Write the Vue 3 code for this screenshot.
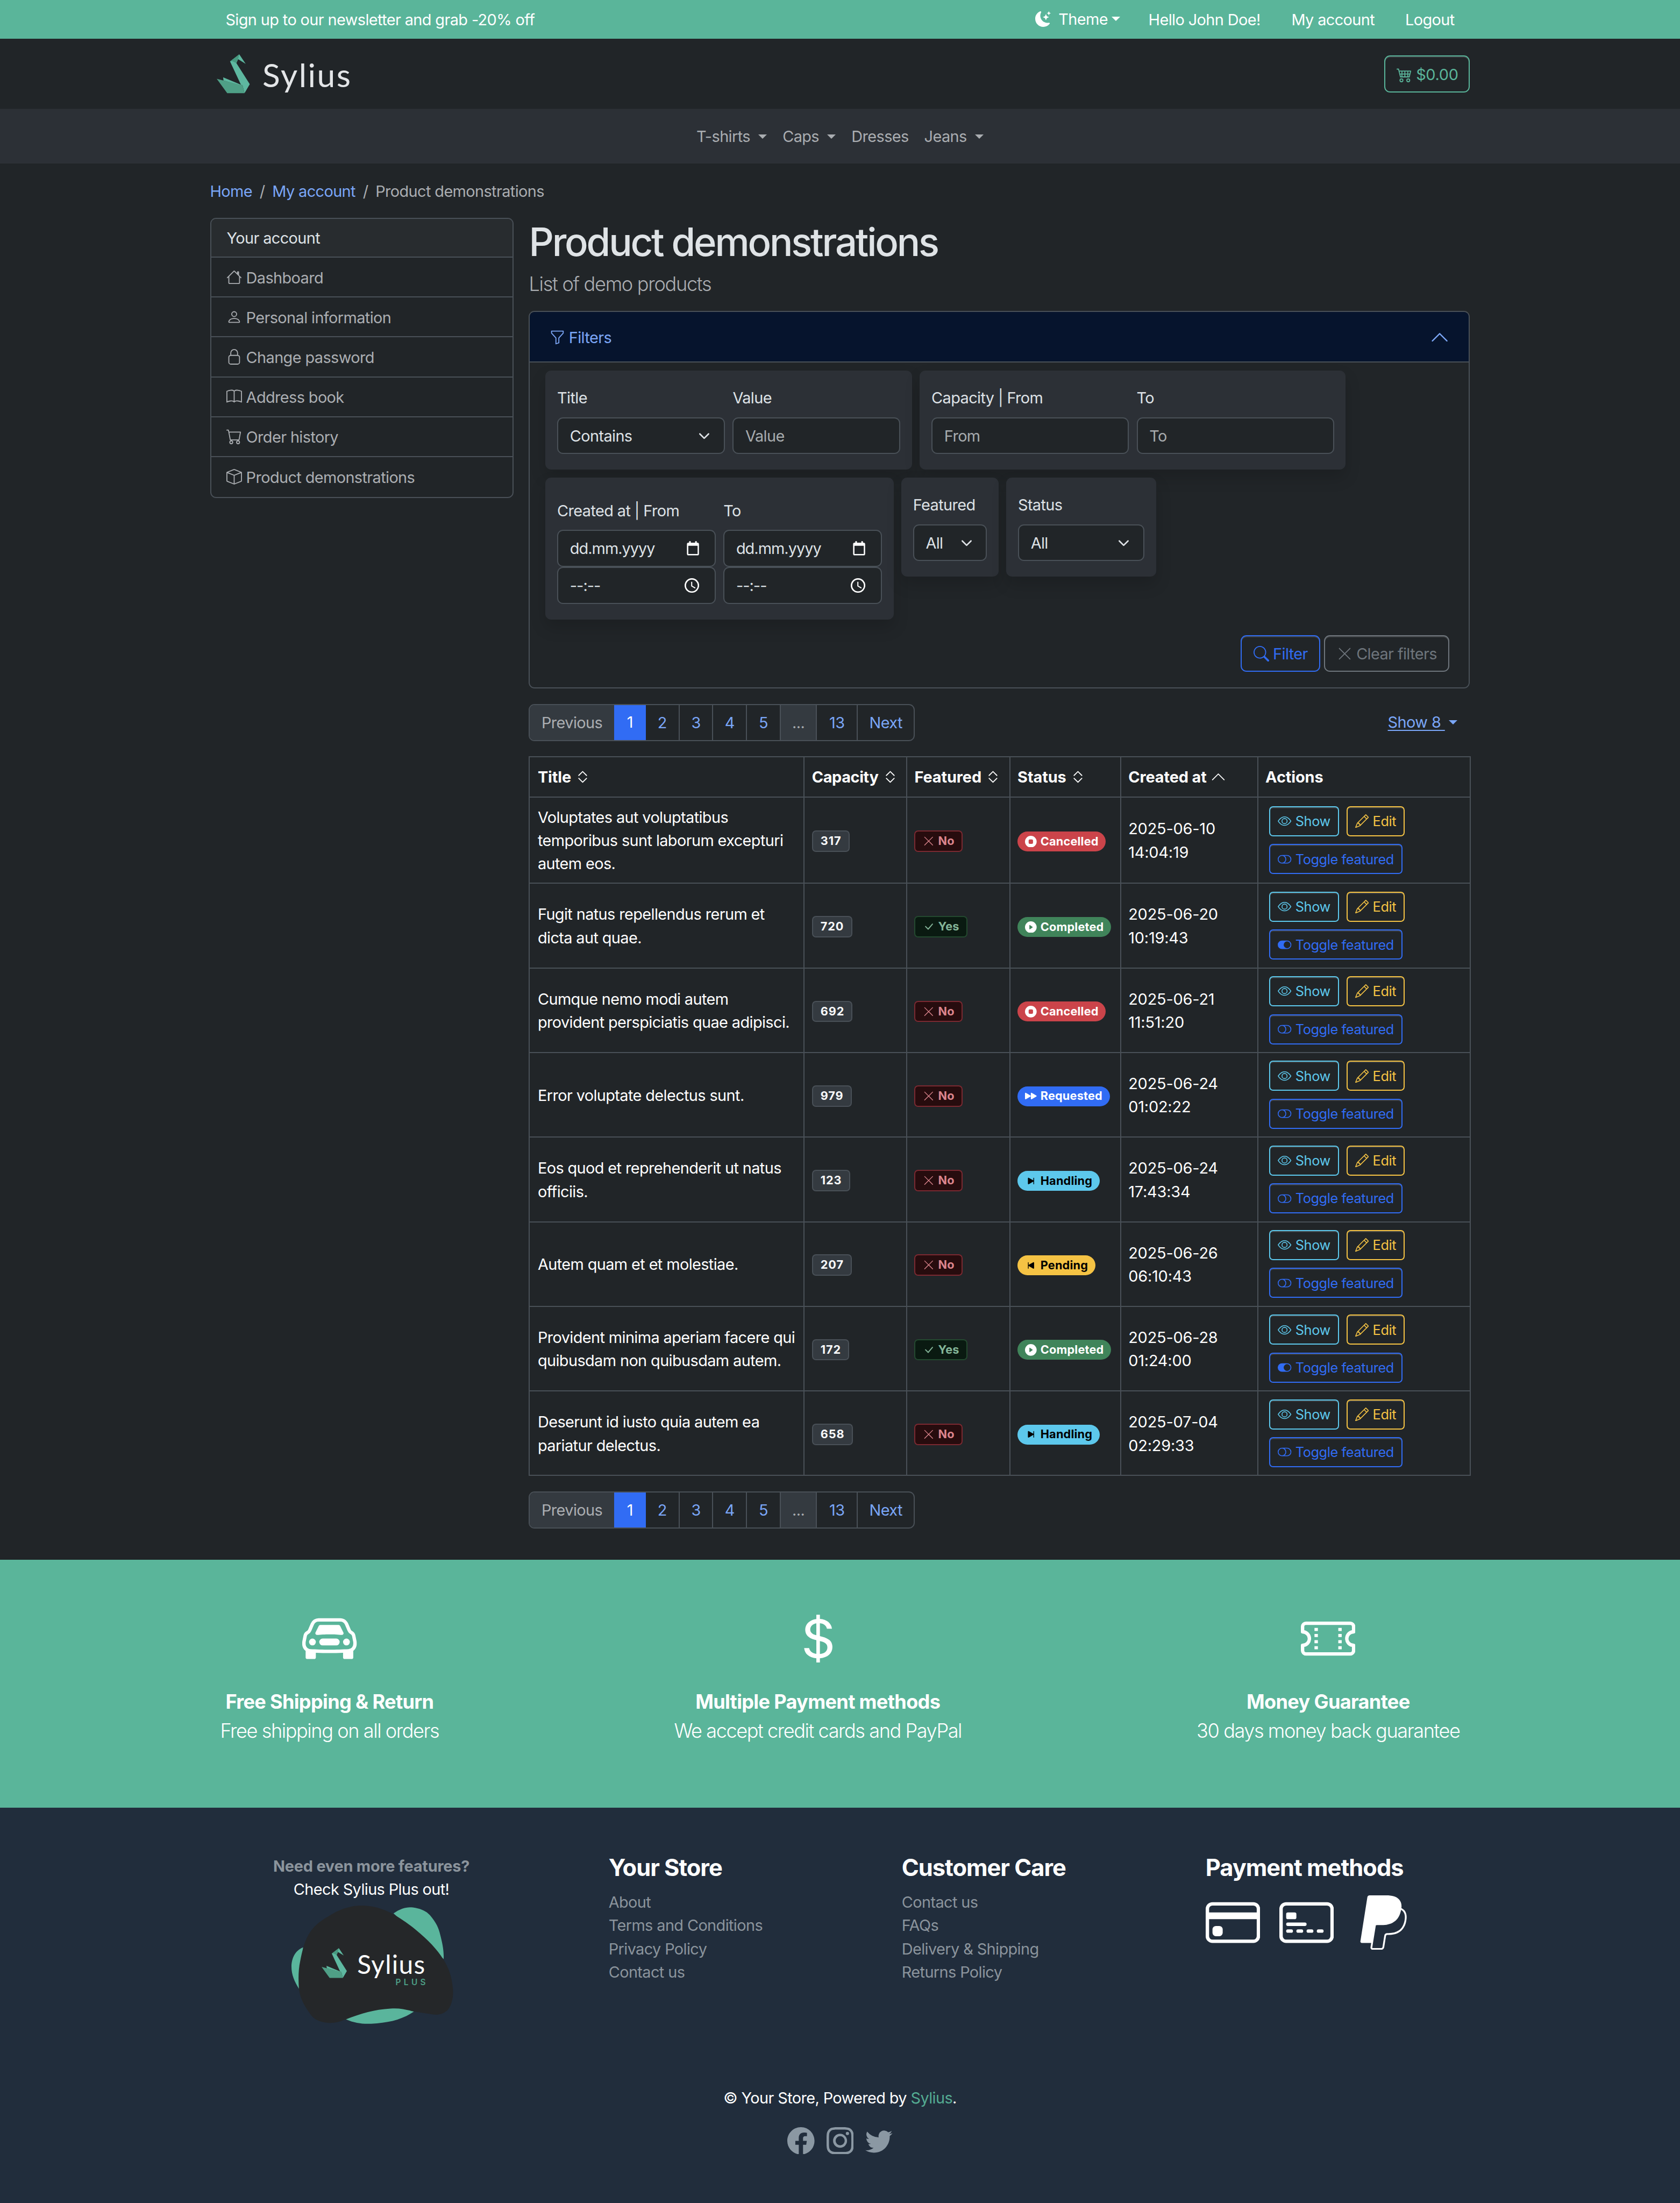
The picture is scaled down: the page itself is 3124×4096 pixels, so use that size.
<script setup>
import { h } from 'vue'

const paths = {
  moon: ['M6 .278a.768.768 0 0 1 .08.858 7.208 7.208 0 0 0-.878 3.46c0 4.021 3.278 7.277 7.318 7.277.527 0 1.04-.055 1.533-.16a.787.787 0 0 1 .81.316.733.733 0 0 1-.031.893A8.349 8.349 0 0 1 8.344 16C3.734 16 0 12.286 0 7.71 0 4.266 2.114 1.312 5.124.06A.752.752 0 0 1 6 .278z', 'M10.794 3.148a.217.217 0 0 1 .412 0l.387 1.162c.173.518.579.924 1.097 1.097l1.162.387a.217.217 0 0 1 0 .412l-1.162.387a1.734 1.734 0 0 0-1.097 1.097l-.387 1.162a.217.217 0 0 1-.412 0l-.387-1.162A1.734 1.734 0 0 0 9.31 6.593l-1.162-.387a.217.217 0 0 1 0-.412l1.162-.387a1.734 1.734 0 0 0 1.097-1.097l.387-1.162zM13.863.099a.145.145 0 0 1 .274 0l.258.774c.115.346.386.617.732.732l.774.258a.145.145 0 0 1 0 .274l-.774.258a1.156 1.156 0 0 0-.732.732l-.258.774a.145.145 0 0 1-.274 0l-.258-.774a1.156 1.156 0 0 0-.732-.732l-.774-.258a.145.145 0 0 1 0-.274l.774-.258c.346-.115.617-.386.732-.732L13.863.1z'],
  cart4: ['M0 2.5A.5.5 0 0 1 .5 2H2a.5.5 0 0 1 .485.379L2.89 4H14.5a.5.5 0 0 1 .485.621l-1.5 6A.5.5 0 0 1 13 11H4a.5.5 0 0 1-.485-.379L1.61 3H.5a.5.5 0 0 1-.5-.5zM3.14 5l.5 2H5V5H3.14zM6 5v2h2V5H6zm3 0v2h2V5H9zm3 0v2h1.36l.5-2H12zm1.11 3H12v2h.61l.5-2zM11 8H9v2h2V8zM8 8H6v2h2V8zM5 8H3.89l.5 2H5V8zm0 5a1 1 0 1 0 0 2 1 1 0 0 0 0-2zm-2 1a2 2 0 1 1 4 0 2 2 0 0 1-4 0zm9-1a1 1 0 1 0 0 2 1 1 0 0 0 0-2zm-2 1a2 2 0 1 1 4 0 2 2 0 0 1-4 0z'],
  house: ['M8.707 1.5a1 1 0 0 0-1.414 0L.646 8.146a.5.5 0 0 0 .708.708L2 8.207V13.5A1.5 1.5 0 0 0 3.5 15h9a1.5 1.5 0 0 0 1.5-1.5V8.207l.646.647a.5.5 0 0 0 .708-.708L13 5.793V2.5a.5.5 0 0 0-.5-.5h-1a.5.5 0 0 0-.5.5v1.293L8.707 1.5ZM13 7.207V13.5a.5.5 0 0 1-.5.5h-9a.5.5 0 0 1-.5-.5V7.207l5-5 5 5Z'],
  person: ['M8 8a3 3 0 1 0 0-6 3 3 0 0 0 0 6Zm2-3a2 2 0 1 1-4 0 2 2 0 0 1 4 0Zm4 8c0 1-1 1-1 1H3s-1 0-1-1 1-4 6-4 6 3 6 4Zm-1-.004c-.001-.246-.154-.986-.832-1.664C11.516 10.68 10.289 10 8 10c-2.29 0-3.516.68-4.168 1.332-.678.678-.83 1.418-.832 1.664h10Z'],
  lock: ['M8 0a4 4 0 0 1 4 4v2.05a2.5 2.5 0 0 1 2 2.45v5a2.5 2.5 0 0 1-2.5 2.5h-7A2.5 2.5 0 0 1 2 13.5v-5a2.5 2.5 0 0 1 2-2.45V4a4 4 0 0 1 4-4M4.5 7A1.5 1.5 0 0 0 3 8.5v5A1.5 1.5 0 0 0 4.5 15h7a1.5 1.5 0 0 0 1.5-1.5v-5A1.5 1.5 0 0 0 11.5 7zM8 1a3 3 0 0 0-3 3v2h6V4a3 3 0 0 0-3-3'],
  book: ['M1 2.828c.885-.37 2.154-.769 3.388-.893 1.33-.134 2.458.063 3.112.752v9.746c-.935-.53-2.12-.603-3.213-.493-1.18.12-2.37.461-3.287.811V2.828zm7.5-.141c.654-.689 1.782-.886 3.112-.752 1.234.124 2.503.523 3.388.893v9.923c-.918-.35-2.107-.692-3.287-.81-1.094-.111-2.278-.039-3.213.492V2.687zM8 1.783C7.015.936 5.587.81 4.287.94c-1.514.153-3.042.672-3.994 1.105A.5.5 0 0 0 0 2.5v11a.5.5 0 0 0 .707.455c.882-.4 2.303-.881 3.68-1.02 1.409-.142 2.59.087 3.223.877a.5.5 0 0 0 .78 0c.633-.79 1.814-1.019 3.222-.877 1.378.139 2.8.62 3.681 1.02A.5.5 0 0 0 16 13.5v-11a.5.5 0 0 0-.293-.455c-.952-.433-2.48-.952-3.994-1.105C10.413.809 8.985.936 8 1.783z'],
  cart: ['M0 1.5A.5.5 0 0 1 .5 1H2a.5.5 0 0 1 .485.379L2.89 3H14.5a.5.5 0 0 1 .491.592l-1.5 8A.5.5 0 0 1 13 12H4a.5.5 0 0 1-.491-.408L2.01 3.607 1.61 2H.5a.5.5 0 0 1-.5-.5zM3.102 4l1.313 7h8.17l1.313-7H3.102zM5 12a2 2 0 1 0 0 4 2 2 0 0 0 0-4zm7 0a2 2 0 1 0 0 4 2 2 0 0 0 0-4zm-7 1a1 1 0 1 1 0 2 1 1 0 0 1 0-2zm7 0a1 1 0 1 1 0 2 1 1 0 0 1 0-2z'],
  box: ['M8.186 1.113a.5.5 0 0 0-.372 0L1.846 3.5 8 5.961 14.154 3.5 8.186 1.113zM15 4.239l-6.5 2.6v7.922l6.5-2.6V4.24zM7.5 14.762V6.838L1 4.239v7.923l6.5 2.6zM7.443.184a1.5 1.5 0 0 1 1.114 0l7.129 2.852A.5.5 0 0 1 16 3.5v8.662a1 1 0 0 1-.629.928l-7.185 2.874a.5.5 0 0 1-.372 0L.63 13.09a1 1 0 0 1-.63-.928V3.5a.5.5 0 0 1 .314-.464L7.443.184z'],
  funnel: ['M1.5 1.5A.5.5 0 0 1 2 1h12a.5.5 0 0 1 .5.5v2a.5.5 0 0 1-.128.334L10 8.692V13.5a.5.5 0 0 1-.342.474l-3 1A.5.5 0 0 1 6 14.5V8.692L1.628 3.834A.5.5 0 0 1 1.5 3.5v-2zm1 .5v1.308l4.372 4.858A.5.5 0 0 1 7 8.5v5.306l2-.666V8.5a.5.5 0 0 1 .128-.334L13.5 3.308V2h-11z'],
  search: ['M11.742 10.344a6.5 6.5 0 1 0-1.397 1.398h-.001c.03.04.062.078.098.115l3.85 3.85a1 1 0 0 0 1.415-1.414l-3.85-3.85a1.007 1.007 0 0 0-.115-.1zM12 6.5a5.5 5.5 0 1 1-11 0 5.5 5.5 0 0 1 11 0z'],
  x: ['M2.146 2.854a.5.5 0 1 1 .708-.708L8 7.293l5.146-5.147a.5.5 0 0 1 .708.708L8.707 8l5.147 5.146a.5.5 0 0 1-.708.708L8 8.707l-5.146 5.147a.5.5 0 0 1-.708-.708L7.293 8 2.146 2.854Z'],
  check: ['M12.736 3.97a.733.733 0 0 1 1.047 0c.286.289.29.756.01 1.05L7.88 12.01a.733.733 0 0 1-1.065.02L3.217 8.384a.757.757 0 0 1 0-1.06.733.733 0 0 1 1.047 0l3.052 3.093 5.4-6.425a.247.247 0 0 1 .02-.022Z'],
  eye: ['M16 8s-3-5.5-8-5.5S0 8 0 8s3 5.5 8 5.5S16 8 16 8zM1.173 8a13.133 13.133 0 0 1 1.66-2.043C4.12 4.668 5.88 3.5 8 3.5c2.12 0 3.879 1.168 5.168 2.457A13.133 13.133 0 0 1 14.828 8c-.058.087-.122.183-.195.288-.335.48-.83 1.12-1.465 1.755C11.879 11.332 10.119 12.5 8 12.5c-2.12 0-3.879-1.168-5.168-2.457A13.134 13.134 0 0 1 1.172 8z', 'M8 5.5a2.5 2.5 0 1 0 0 5 2.5 2.5 0 0 0 0-5zM4.5 8a3.5 3.5 0 1 1 7 0 3.5 3.5 0 0 1-7 0z'],
  pencil: ['M12.146.146a.5.5 0 0 1 .708 0l3 3a.5.5 0 0 1 0 .708l-10 10a.5.5 0 0 1-.168.11l-5 2a.5.5 0 0 1-.65-.65l2-5a.5.5 0 0 1 .11-.168l10-10zM11.207 2.5 13.5 4.793 14.793 3.5 12.5 1.207 11.207 2.5zm1.586 3L10.5 3.207 4 9.707V10h.5a.5.5 0 0 1 .5.5v.5h.5a.5.5 0 0 1 .5.5v.5h.293l6.5-6.5zm-9.761 5.175-.106.106-1.528 3.821 3.821-1.528.106-.106A.5.5 0 0 1 5 12.5V12h-.5a.5.5 0 0 1-.5-.5V11h-.5a.5.5 0 0 1-.468-.325z'],
  toggleOff: ['M11 4a4 4 0 0 1 0 8H8a4.992 4.992 0 0 0 2-4 4.992 4.992 0 0 0-2-4h3zm-6 8a4 4 0 1 1 0-8 4 4 0 0 1 0 8zM0 8a5 5 0 0 0 5 5h6a5 5 0 0 0 0-10H5a5 5 0 0 0-5 5z'],
  toggleOn: ['M5 3a5 5 0 0 0 0 10h6a5 5 0 0 0 0-10H5zm6 9a4 4 0 1 1 0-8 4 4 0 0 1 0 8z'],
  up: ['M7.646 4.646a.5.5 0 0 1 .708 0l6 6a.5.5 0 0 1-.708.708L8 5.707l-5.646 5.647a.5.5 0 0 1-.708-.708l6-6z'],
  expand: ['M3.646 9.146a.5.5 0 0 1 .708 0L8 12.793l3.646-3.647a.5.5 0 0 1 .708.708l-4 4a.5.5 0 0 1-.708 0l-4-4a.5.5 0 0 1 0-.708zm0-2.292a.5.5 0 0 0 .708 0L8 3.207l3.646 3.647a.5.5 0 0 0 .708-.708l-4-4a.5.5 0 0 0-.708 0l-4 4a.5.5 0 0 0 0 .708z'],
  stop: ['M16 8A8 8 0 1 1 0 8a8 8 0 0 1 16 0zM6.5 5A1.5 1.5 0 0 0 5 6.5v3A1.5 1.5 0 0 0 6.5 11h3A1.5 1.5 0 0 0 11 9.5v-3A1.5 1.5 0 0 0 9.5 5h-3z'],
  play: ['M16 8A8 8 0 1 1 0 8a8 8 0 0 1 16 0zM6.79 5.093A.5.5 0 0 0 6 5.5v5a.5.5 0 0 0 .79.407l3.5-2.5a.5.5 0 0 0 0-.814l-3.5-2.5z'],
  forward: ['M7.596 7.304a.802.802 0 0 1 0 1.392l-6.363 3.692C.713 12.69 0 12.345 0 11.692V4.308c0-.653.713-.998 1.233-.696l6.363 3.692Z', 'M15.596 7.304a.802.802 0 0 1 0 1.392l-6.363 3.692C8.713 12.69 8 12.345 8 11.692V4.308c0-.653.713-.998 1.233-.696l6.363 3.692Z'],
  skipEnd: ['M12.5 4a.5.5 0 0 0-1 0v3.248L5.233 3.612C4.693 3.3 4 3.678 4 4.308v7.384c0 .63.692 1.01 1.233.697L11.5 8.753V12a.5.5 0 0 0 1 0V4z'],
  skipStart: ['M4 4a.5.5 0 0 1 1 0v3.248l6.267-3.636c.54-.313 1.232.066 1.232.696v7.384c0 .63-.692 1.01-1.232.697L5 8.753V12a.5.5 0 0 1-1 0V4z'],
  car: ['M4 9a1 1 0 1 1-2 0 1 1 0 0 1 2 0Zm10 0a1 1 0 1 1-2 0 1 1 0 0 1 2 0ZM6 8a1 1 0 0 0 0 2h4a1 1 0 1 0 0-2H6ZM4.862 4.276 3.906 6.19a.51.51 0 0 0 .497.731c.91-.073 2.35-.17 3.597-.17 1.247 0 2.688.097 3.597.17a.51.51 0 0 0 .497-.731l-.956-1.913A.5.5 0 0 0 10.691 4H5.309a.5.5 0 0 0-.447.276Z', 'M2.52 3.515A2.5 2.5 0 0 1 4.82 2h6.362c1 0 1.904.596 2.298 1.515l.792 1.848c.075.175.21.319.38.404.5.25.855.715.965 1.262l.335 1.679c.033.161.049.325.049.49v.413c0 .814-.39 1.543-1 1.997V13.5a.5.5 0 0 1-.5.5h-2a.5.5 0 0 1-.5-.5v-1.338c-1.292.048-2.745.088-4 .088s-2.708-.04-4-.088V13.5a.5.5 0 0 1-.5.5h-2a.5.5 0 0 1-.5-.5v-1.892c-.61-.454-1-1.183-1-1.997v-.413a2.5 2.5 0 0 1 .049-.49l.335-1.68c.11-.546.465-1.012.964-1.261a.807.807 0 0 0 .381-.404l.792-1.848ZM4.82 3a1.5 1.5 0 0 0-1.379.91l-.792 1.847a1.8 1.8 0 0 1-.853.904.807.807 0 0 0-.43.564L1.03 8.904a1.5 1.5 0 0 0-.03.294v.413c0 .796.62 1.448 1.408 1.484 1.555.07 3.786.155 5.592.155 1.806 0 4.037-.084 5.592-.155A1.479 1.479 0 0 0 15 9.611v-.413c0-.099-.01-.197-.03-.294l-.335-1.68a.807.807 0 0 0-.43-.563 1.807 1.807 0 0 1-.853-.904l-.792-1.848A1.5 1.5 0 0 0 11.18 3H4.82Z'],
  dollar: ['M4 10.781c.148 1.667 1.513 2.85 3.591 3.003V15h1.043v-1.216c2.27-.179 3.678-1.438 3.678-3.3 0-1.59-.947-2.51-2.956-3.028l-.722-.187V3.467c1.122.11 1.879.714 2.07 1.616h1.47c-.166-1.6-1.54-2.748-3.54-2.875V1H7.591v1.233c-1.939.23-3.27 1.472-3.27 3.156 0 1.454.966 2.483 2.661 2.917l.61.162v4.031c-1.149-.17-1.94-.8-2.131-1.718H4zm3.391-3.836c-1.043-.263-1.6-.825-1.6-1.616 0-.944.704-1.641 1.8-1.828v3.495l-.2-.05zm1.591 1.872c1.287.323 1.852.859 1.852 1.769 0 1.097-.826 1.828-2.2 1.939V8.73l.348.086z'],
  ticket: ['M4 4.85v.9h1v-.9H4Zm7 0v.9h1v-.9h-1Zm-7 1.8v.9h1v-.9H4Zm7 0v.9h1v-.9h-1Zm-7 1.8v.9h1v-.9H4Zm7 0v.9h1v-.9h-1Zm-7 1.8v.9h1v-.9H4Zm7 0v.9h1v-.9h-1Z', 'M1.5 3A1.5 1.5 0 0 0 0 4.5V6a.5.5 0 0 0 .5.5 1.5 1.5 0 1 1 0 3 .5.5 0 0 0-.5.5v1.5A1.5 1.5 0 0 0 1.5 13h13a1.5 1.5 0 0 0 1.5-1.5V10a.5.5 0 0 0-.5-.5 1.5 1.5 0 0 1 0-3A.5.5 0 0 0 16 6V4.5A1.5 1.5 0 0 0 14.5 3h-13ZM1 4.5a.5.5 0 0 1 .5-.5h13a.5.5 0 0 1 .5.5v1.05a2.5 2.5 0 0 0 0 4.9v1.05a.5.5 0 0 1-.5.5h-13a.5.5 0 0 1-.5-.5v-1.05a2.5 2.5 0 0 0 0-4.9V4.5Z'],
  card: ['M0 4a2 2 0 0 1 2-2h12a2 2 0 0 1 2 2v8a2 2 0 0 1-2 2H2a2 2 0 0 1-2-2V4zm2-1a1 1 0 0 0-1 1v1h14V4a1 1 0 0 0-1-1H2zm13 4H1v5a1 1 0 0 0 1 1h12a1 1 0 0 0 1-1V7z', 'M2 10a1 1 0 0 1 1-1h1a1 1 0 0 1 1 1v1a1 1 0 0 1-1 1H3a1 1 0 0 1-1-1v-1z'],
  cardFront: ['M14 3a1 1 0 0 1 1 1v8a1 1 0 0 1-1 1H2a1 1 0 0 1-1-1V4a1 1 0 0 1 1-1h12zM2 2a2 2 0 0 0-2 2v8a2 2 0 0 0 2 2h12a2 2 0 0 0 2-2V4a2 2 0 0 0-2-2H2z', 'M2 5.5a.5.5 0 0 1 .5-.5h2a.5.5 0 0 1 .5.5v1a.5.5 0 0 1-.5.5h-2a.5.5 0 0 1-.5-.5v-1zm0 3a.5.5 0 0 1 .5-.5h5a.5.5 0 0 1 0 1h-5a.5.5 0 0 1-.5-.5zm0 2a.5.5 0 0 1 .5-.5h1a.5.5 0 0 1 0 1h-1a.5.5 0 0 1-.5-.5zm3 0a.5.5 0 0 1 .5-.5h1a.5.5 0 0 1 0 1h-1a.5.5 0 0 1-.5-.5zm3 0a.5.5 0 0 1 .5-.5h1a.5.5 0 0 1 0 1h-1a.5.5 0 0 1-.5-.5zm3 0a.5.5 0 0 1 .5-.5h1a.5.5 0 0 1 0 1h-1a.5.5 0 0 1-.5-.5z'],
  paypal: ['M14.06 3.713c.12-1.071-.093-1.832-.702-2.526C12.628.356 11.312 0 9.626 0H4.734a.7.7 0 0 0-.691.59L2.005 13.509a.42.42 0 0 0 .415.486h2.756l-.202 1.28a.628.628 0 0 0 .62.726H8.14c.429 0 .793-.31.862-.731l.025-.13.48-3.043.03-.164.001-.007a.351.351 0 0 1 .348-.297h.38c1.266 0 2.425-.256 3.345-.91.379-.27.712-.603.993-1.005a4.942 4.942 0 0 0 .88-2.195c.242-1.246.13-2.356-.57-3.154a2.687 2.687 0 0 0-.76-.59l-.094-.061ZM6.543 8.82a.695.695 0 0 1 .321-.079H8.3c2.82 0 5.027-1.144 5.672-4.456l.003-.016c.217.124.4.27.548.438.546.623.679 1.535.45 2.71-.272 1.397-.866 2.307-1.663 2.874-.802.57-1.842.815-3.043.815h-.38a.873.873 0 0 0-.863.734l-.03.164-.48 3.043-.024.13-.001.004a.352.352 0 0 1-.348.296H5.595a.106.106 0 0 1-.105-.123l.208-1.32.845-5.214Z'],
  facebook: ['M16 8.049c0-4.446-3.582-8.05-8-8.05C3.58 0-.002 3.603-.002 8.05c0 4.017 2.926 7.347 6.75 7.951v-5.625h-2.03V8.05H6.75V6.275c0-2.017 1.195-3.131 3.022-3.131.876 0 1.791.157 1.791.157v1.98h-1.009c-.993 0-1.303.621-1.303 1.258v1.51h2.218l-.354 2.326H9.25V16c3.824-.604 6.75-3.934 6.75-7.951z'],
  instagram: ['M8 0C5.829 0 5.556.01 4.703.048 3.85.088 3.269.222 2.76.42a3.917 3.917 0 0 0-1.417.923A3.927 3.927 0 0 0 .42 2.76C.222 3.268.087 3.85.048 4.7.01 5.555 0 5.827 0 8.001c0 2.172.01 2.444.048 3.297.04.852.174 1.433.372 1.942.205.526.478.972.923 1.417.444.445.89.719 1.416.923.51.198 1.09.333 1.942.372C5.555 15.99 5.827 16 8 16s2.444-.01 3.298-.048c.851-.04 1.434-.174 1.943-.372a3.916 3.916 0 0 0 1.416-.923c.445-.445.718-.891.923-1.417.197-.509.332-1.09.372-1.942C15.99 10.445 16 10.173 16 8s-.01-2.445-.048-3.299c-.04-.851-.175-1.433-.372-1.941a3.926 3.926 0 0 0-.923-1.417A3.911 3.911 0 0 0 13.24.42c-.51-.198-1.092-.333-1.943-.372C10.443.01 10.172 0 7.998 0h.003zm-.717 1.442h.718c2.136 0 2.389.007 3.232.046.78.035 1.204.166 1.486.275.373.145.64.319.92.599.28.28.453.546.598.92.11.281.24.705.275 1.485.039.843.047 1.096.047 3.231s-.008 2.389-.047 3.232c-.035.78-.166 1.203-.275 1.485a2.47 2.47 0 0 1-.599.919c-.28.28-.546.453-.92.598-.28.11-.704.24-1.485.276-.843.038-1.096.047-3.232.047s-2.39-.009-3.233-.047c-.78-.036-1.203-.166-1.485-.276a2.478 2.478 0 0 1-.92-.598 2.48 2.48 0 0 1-.6-.92c-.109-.281-.24-.705-.275-1.485-.038-.843-.046-1.096-.046-3.233 0-2.136.008-2.388.046-3.231.036-.78.166-1.204.276-1.486.145-.373.319-.64.599-.92.28-.28.546-.453.92-.598.282-.11.705-.24 1.485-.276.738-.034 1.024-.044 2.515-.045v.002zm4.988 1.328a.96.96 0 1 0 0 1.92.96.96 0 0 0 0-1.92zm-4.27 1.122a4.109 4.109 0 1 0 0 8.217 4.109 4.109 0 0 0 0-8.217zm0 1.441a2.667 2.667 0 1 1 0 5.334 2.667 2.667 0 0 1 0-5.334z'],
  twitter: ['M5.026 15c6.038 0 9.341-5.003 9.341-9.334 0-.14 0-.282-.006-.422A6.685 6.685 0 0 0 16 3.542a6.658 6.658 0 0 1-1.889.518 3.301 3.301 0 0 0 1.447-1.817 6.533 6.533 0 0 1-2.087.793A3.286 3.286 0 0 0 7.875 6.03a9.325 9.325 0 0 1-6.767-3.429 3.289 3.289 0 0 0 1.018 4.382A3.323 3.323 0 0 1 .64 6.575v.045a3.288 3.288 0 0 0 2.632 3.218 3.203 3.203 0 0 1-.865.115 3.23 3.23 0 0 1-.614-.057 3.283 3.283 0 0 0 3.067 2.277A6.588 6.588 0 0 1 .78 13.58a6.32 6.32 0 0 1-.78-.045A9.344 9.344 0 0 0 5.026 15z'],
  calendar: ['M13.1 1.7h-.9V.2h-1.8v1.5H5.6V.2H3.800v1.500h-.9c-.9 0-1.500.7-1.500 1.500v10.900c0 .9.700 1.600 1.500 1.600h10.200c.9 0 1.500-.7 1.500-1.600V3.200c0-.9-.7-1.500-1.500-1.500zm0 12.400H2.900V5.200h10.200v8.900z'],
  clock: ['M8 0a8 8 0 1 0 0 16A8 8 0 0 0 8 0zm0 14.400A6.400 6.400 0 1 1 8 1.600a6.400 6.400 0 0 1 0 12.800zM8.400 4H7.200v4.800l4.200 2.500.6-1-3.600-2.100V4z']
}

const Icon = (props) =>
  h('svg', { class: 'icon', viewBox: '0 0 16 16', fill: 'currentColor' }, paths[props.name].map((d) => h('path', { d })))
Icon.props = ['name']

const Chevron = () =>
  h('svg', { class: 'chevron', viewBox: '0 0 16 16', fill: 'none', stroke: '#dee2e6', 'stroke-width': 2, 'stroke-linecap': 'round', 'stroke-linejoin': 'round' }, [h('path', { d: 'm2 5 6 6 6-6' })])

const Swan = () =>
  h('svg', { class: 'swan', viewBox: '0 0 34 40' }, [
    h('path', { fill: '#5eb8a0', d: 'M23.200 0 29.800 9.800 22 5 20.200 9 34 30.700 28.600 40 26.500 32 24.900 31.200 13.700 7.300z' }),
    h('path', { fill: '#479a80', d: 'M23.200 0 13.700 7.300 16 7.100 20.200 9 22 5z' }),
    h('path', { fill: '#5eb8a0', d: 'M6.600 23.700 24.900 31.200 26.500 32.500 7 27z' }),
    h('path', { fill: '#4f9f86', d: 'M0 25.200 26.500 32 28.600 40H10.800z' })
  ])

const categories = [
  { name: 'T-shirts', menu: true }, { name: 'Caps', menu: true }, { name: 'Dresses' }, { name: 'Jeans', menu: true }
]
const account = [
  ['house', 'Dashboard'], ['person', 'Personal information'], ['lock', 'Change password'],
  ['book', 'Address book'], ['cart', 'Order history'], ['box', 'Product demonstrations']
]
const pages = [
  { label: 'Previous', state: 'muted prev' }, { label: '1', state: 'active' }, { label: '2' }, { label: '3' }, { label: '4' },
  { label: '5' }, { label: '...', state: 'muted dots' }, { label: '13', state: 'wide' }, { label: 'Next', state: 'next' }
]
const columns = [
  ['Title', 'expand'], ['Capacity', 'expand'], ['Featured', 'expand'], ['Status', 'expand'], ['Created at', 'up'], ['Actions', null]
]
const statusIcons = { Cancelled: 'stop', Completed: 'play', Requested: 'forward', Handling: 'skipEnd', Pending: 'skipStart' }
const products = [
  { title: ['Voluptates aut voluptatibus', 'temporibus sunt laborum excepturi', 'autem eos.'], capacity: 317, featured: false, status: 'Cancelled', date: '2025-06-10', time: '14:04:19' },
  { title: ['Fugit natus repellendus rerum et', 'dicta aut quae.'], capacity: 720, featured: true, status: 'Completed', date: '2025-06-20', time: '10:19:43' },
  { title: ['Cumque nemo modi autem', 'provident perspiciatis quae adipisci.'], capacity: 692, featured: false, status: 'Cancelled', date: '2025-06-21', time: '11:51:20' },
  { title: ['Error voluptate delectus sunt.'], capacity: 979, featured: false, status: 'Requested', date: '2025-06-24', time: '01:02:22' },
  { title: ['Eos quod et reprehenderit ut natus', 'officiis.'], capacity: 123, featured: false, status: 'Handling', date: '2025-06-24', time: '17:43:34' },
  { title: ['Autem quam et et molestiae.'], capacity: 207, featured: false, status: 'Pending', date: '2025-06-26', time: '06:10:43' },
  { title: ['Provident minima aperiam facere qui', 'quibusdam non quibusdam autem.'], capacity: 172, featured: true, status: 'Completed', date: '2025-06-28', time: '01:24:00' },
  { title: ['Deserunt id iusto quia autem ea', 'pariatur delectus.'], capacity: 658, featured: false, status: 'Handling', date: '2025-07-04', time: '02:29:33' }
]
const perks = [
  ['car', 'Free Shipping & Return', 'Free shipping on all orders'],
  ['dollar', 'Multiple Payment methods', 'We accept credit cards and PayPal'],
  ['ticket', 'Money Guarantee', '30 days money back guarantee']
]
</script>

<template>
  <div class="page">
    <div class="topbar">
      <div class="container topbar-row">
        <span>Sign up to our newsletter and grab -20% off</span>
        <div class="topbar-links">
          <span class="theme"><Icon name="moon" />Theme<i class="caret"></i></span>
          <span class="hello">Hello John Doe!</span>
          <span class="mine">My account</span>
          <span>Logout</span>
        </div>
      </div>
    </div>

    <header class="header">
      <div class="container header-row">
        <div class="logo"><Swan /><span>Sylius</span></div>
        <button class="btn cart-btn"><Icon name="cart4" />$0.00</button>
      </div>
    </header>

    <nav class="nav">
      <span v-for="c in categories" :key="c.name">{{ c.name }}<i v-if="c.menu" class="caret"></i></span>
    </nav>

    <main class="container main">
      <div class="crumbs"><a>Home</a><span>/</span><a>My account</a><span>/</span><span>Product demonstrations</span></div>
      <div class="layout">
        <aside class="side">
          <div class="side-item head">Your account</div>
          <div v-for="[icon, label] in account" :key="label" class="side-item"><Icon :name="icon" />{{ label }}</div>
        </aside>

        <section class="content">
          <h1>Product demonstrations</h1>
          <p class="lead">List of demo products</p>

          <div class="accordion">
            <div class="accordion-head"><Icon name="funnel" /><span>Filters</span><Icon name="up" class="toggle" /></div>
            <div class="accordion-body">
              <div class="filter-row">
                <div class="filter f-title">
                  <div class="field"><label>Title</label><div class="input">Contains<Chevron /></div></div>
                  <div class="field"><label>Value</label><div class="input hint">Value</div></div>
                </div>
                <div class="filter f-capacity">
                  <div class="field"><label>Capacity | From</label><div class="input hint">From</div></div>
                  <div class="field"><label>To</label><div class="input hint">To</div></div>
                </div>
              </div>
              <div class="filter-row second">
                <div class="filter f-created">
                  <div v-for="l in ['Created at | From', 'To']" :key="l" class="field">
                    <label>{{ l }}</label>
                    <div class="input date">dd.mm.yyyy<Icon name="calendar" /></div>
                    <div class="input time">--:--<Icon name="clock" /></div>
                  </div>
                </div>
                <div class="filter f-featured"><div class="field"><label>Featured</label><div class="input">All<Chevron /></div></div></div>
                <div class="filter f-status"><div class="field"><label>Status</label><div class="input">All<Chevron /></div></div></div>
              </div>
              <div class="filter-actions">
                <button class="btn filter-btn"><Icon name="search" />Filter</button>
                <button class="btn clear-btn"><Icon name="x" />Clear filters</button>
              </div>
            </div>
          </div>

          <div class="pager-row">
            <div class="pager"><span v-for="p in pages" :key="p.label" :class="p.state">{{ p.label }}</span></div>
            <div class="show"><u>Show 8&nbsp;</u><i class="caret"></i></div>
          </div>

          <table class="grid">
            <colgroup><col class="c1" /><col class="c2" /><col class="c3" /><col class="c4" /><col class="c5" /><col class="c6" /></colgroup>
            <thead>
              <tr><th v-for="[label, icon] in columns" :key="label"><div class="th">{{ label }}<Icon v-if="icon" :name="icon" /></div></th></tr>
            </thead>
            <tbody>
              <tr v-for="p in products" :key="p.date + p.time">
                <td><div class="txt"><div v-for="line in p.title" :key="line">{{ line }}</div></div></td>
                <td><span class="badge capacity">{{ p.capacity }}</span></td>
                <td><span :class="['badge', p.featured ? 'yes' : 'no']"><Icon :name="p.featured ? 'check' : 'x'" />{{ p.featured ? 'Yes' : 'No' }}</span></td>
                <td><span :class="['pill', p.status.toLowerCase()]"><Icon :name="statusIcons[p.status]" />{{ p.status }}</span></td>
                <td><div class="txt num"><div>{{ p.date }}</div><div>{{ p.time }}</div></div></td>
                <td>
                  <div class="actions">
                    <button class="btn sm info"><Icon name="eye" />Show</button>
                    <button class="btn sm warn"><Icon name="pencil" />Edit</button>
                    <button class="btn sm prim"><Icon :name="p.featured ? 'toggleOn' : 'toggleOff'" />Toggle featured</button>
                  </div>
                </td>
              </tr>
            </tbody>
          </table>

          <div class="pager-row bottom">
            <div class="pager"><span v-for="p in pages" :key="p.label" :class="p.state">{{ p.label }}</span></div>
          </div>
        </section>
      </div>
    </main>

    <section class="perks">
      <div v-for="[icon, title, text] in perks" :key="icon" class="perk">
        <Icon :name="icon" />
        <strong>{{ title }}</strong>
        <span>{{ text }}</span>
      </div>
    </section>

    <footer class="footer">
      <div class="footer-cols">
        <div class="plus">
          <strong>Need even more features?</strong>
          <span>Check Sylius Plus out!</span>
          <div class="blob">
            <svg class="blob-shape" viewBox="0 0 167 122">
              <path fill="#5ab59c" d="M12 43C4 46 0 54 0 63c0 8 3 15 8 23zM105 8c7-5 14-7 20-6 8 1 14 4 17.500 8 6 7 9 13 10.500 20 2 8 4 16 3.500 25zM56 117c9 4 18 5 26 4.500 18-1 31-4 44-12.500l-20-8-30 4z" />
              <path fill="#252729" d="M72 0C92 0 108 9 128 25c12 10 22 20 28 30 6 9 9 19 10 30 1 8-1 17-5 22-4 4-9 6-15.400 5-7-1-13-2-19.600-3-8-2-16-4-24-3-17 1-30 5-46 11-7 3-14 4.500-21 3.300C27 119 22 116 19 111c-6-8-10-16-11.300-25C7 76 7 66 9 57c2-10 4-19 8.500-27C22 22 29 16 37 11.700 47 5 59 0 72 0z" />
            </svg>
            <div class="blob-logo"><Swan /><div class="blob-text"><span>Sylius</span><small>PLUS</small></div></div>
          </div>
        </div>
        <div class="links store"><h4>Your Store</h4><a>About</a><a>Terms and Conditions</a><a>Privacy Policy</a><a>Contact us</a></div>
        <div class="links care"><h4>Customer Care</h4><a>Contact us</a><a>FAQs</a><a>Delivery &amp; Shipping</a><a>Returns Policy</a></div>
        <div class="links pay"><h4>Payment methods</h4><div class="cards"><Icon name="card" /><Icon name="cardFront" /><Icon name="paypal" /></div></div>
      </div>
      <p class="copy">© Your Store, Powered by <a>Sylius</a>.</p>
      <div class="social"><Icon name="facebook" /><Icon name="instagram" /><Icon name="twitter" /></div>
    </footer>
  </div>
</template>

<style>
body { margin: 0; background: #212d3c; }
</style>

<style scoped>
.page {
  --b: 1.11px;
  --line: #495057;
  --green: #5ab59a;
  zoom: 1.80787;
  width: 1728px;
  height: 2265.6px;
  overflow: hidden;
  box-sizing: border-box;
  background: #212528;
  color: #dee2e6;
  font: 420 16px/24px Inter, "Noto Sans", sans-serif;
  letter-spacing: -0.0215em;
}
.page * { box-sizing: border-box; }
.icon { display: block; flex: none; width: 16px; height: 16px; }
.swan { display: block; flex: none; }
.container { width: 1296px; margin: 0 auto; }
.caret { display: inline-block; border: 4.8px solid transparent; border-top-color: currentColor; border-bottom: 0; vertical-align: 3px; }
.btn {
  display: flex; align-items: center; background: none; border: var(--b) solid; border-radius: 6px;
  font: inherit; letter-spacing: inherit; height: 38px; padding: 1px 11.900px 0; white-space: nowrap;
  box-shadow: inset 0 1px 0 rgba(255, 255, 255, .15);
}

.topbar { height: 40px; background: var(--green); color: #fff; }
.topbar-row { height: 40px; padding: 1px 16px 0; display: flex; align-items: center; justify-content: space-between; }
.topbar-links { display: flex; align-items: center; }
.theme { display: flex; align-items: center; margin: -2px 29px 0 0; }
.theme .icon { margin-right: 8px; }
.theme .caret { margin-left: 4px; }
.hello { margin-right: 32px; }
.mine { margin-right: 31.500px; }

.header { height: 72px; }
.header-row { height: 72px; display: flex; align-items: center; justify-content: space-between; }
.logo { display: flex; align-items: flex-start; height: 40px; padding-left: 7px; color: #e4e6e8; }
.logo .swan { width: 34px; height: 40px; }
.logo span { font: 400 33.500px/40px Lato, sans-serif; letter-spacing: 1.400px; margin: 1px 0 0 13px; }
.cart-btn { width: 88.500px; padding-right: 0; color: var(--green); letter-spacing: -0.012em; }
.cart-btn .icon { margin-right: 4px; }

.nav { height: 56px; background: #2c3036; display: flex; align-items: center; justify-content: center; gap: 16px; color: #aaadb1; border-top: 1px solid #282c30; }
.nav .caret { margin-left: 8.500px; }

.main { height: 1436px; padding-top: 16.500px; }
.crumbs { display: flex; gap: 7.600px; height: 39.500px; color: #aaadb1; }
.crumbs a { color: #7aa6f7; }
.layout { display: flex; gap: 16px; }
.side { width: 312px; height: 288px; border: var(--b) solid var(--line); border-radius: 6px; color: #abaeb2; overflow: hidden; }
.side-item { height: 41px; padding: 1px 16px 0; display: flex; align-items: center; border-bottom: var(--b) solid var(--line); }
.side-item:last-child { border-bottom: 0; }
.side-item .icon { margin: -1px 4px 0 0; }
.side-item.head { height: 40px; padding-top: 0.500px; background: #282c2f; color: #dee2e6; }
.content { width: 968px; }
h1 { margin: 1px 0 7px; font-size: 40px; line-height: 48px; font-weight: 500; letter-spacing: -0.0438em; color: #dfe3e6; }
.lead { margin: 0; height: 40px; padding-top: 0.700px; font-size: 20px; line-height: 24px; font-weight: 360; letter-spacing: -0.036em; color: #abaeb2; }

.accordion { height: 388px; border: var(--b) solid var(--line); border-radius: 6px; overflow: hidden; }
.accordion-head { height: 52px; padding: 1px 20px 0; display: flex; align-items: center; gap: 4px; background: #06142d; color: #7ca7f7; border-bottom: var(--b) solid var(--line); }
.accordion-head .toggle { width: 20px; height: 20px; margin-left: auto; }
.accordion-body { padding: 8px 20px 0 16px; }
.filter-row { display: flex; gap: 8px; align-items: flex-start; }
.filter-row.second { margin-top: 8px; }
.filter { display: flex; gap: 8px; padding: 16px 12px; background: #2c3036; border-radius: 6px; box-shadow: 0 8px 16px rgba(0, 0, 0, .15); }
.field { flex: 1; }
.field label { display: block; height: 32px; padding-top: 0.300px; color: #dee2e6; }
.input { height: 38px; border: var(--b) solid var(--line); border-radius: 6px; background: #212528; padding: 0.700px 12px 0; display: flex; align-items: center; }
.input.hint { color: #a7abae; }
.chevron { width: 16px; height: 12px; margin-left: auto; }
.input .icon { margin-left: auto; margin-right: 3px; color: #fff; width: 15px; height: 15px; }
.input.time .icon { margin-right: 4px; }
.input.date, .input.time { letter-spacing: -0.034em; padding-top: 0; }
.f-title { width: 377px; }
.f-capacity { width: 438px; }
.f-created { width: 358px; height: 146px; padding-top: 22px; }
.f-featured { width: 100px; }
.f-status { width: 154px; }
.filter-actions { display: flex; justify-content: flex-end; gap: 4px; margin-top: 16px; }
.filter-btn { color: #316cf2; border-color: #316cf2; }
.filter-btn .icon, .clear-btn .icon { margin-right: 4px; }
.clear-btn { color: #6e757c; border-color: #6e757c; }

.pager-row { margin-top: 16px; height: 38px; display: flex; justify-content: space-between; align-items: center; }
.pager { display: flex; height: 38px; border: var(--b) solid var(--line); border-radius: 6px; overflow: hidden; color: #7aa6f7; }
.pager span { width: 34.700px; padding-top: 6px; text-align: center; border-right: var(--b) solid var(--line); }
.pager .muted { background: #343a40; color: #abaeb2; }
.pager .prev { width: 86.400px; border-right: 0; }
.pager .active { width: 32.800px; background: #316cf4; color: #fff; border: 0; margin: -1.11px 0; padding-top: 7px; }
.pager .dots { width: 37.300px; }
.pager .wide { width: 42px; }
.pager .next { width: 57.500px; border-right: 0; }
.show { display: flex; align-items: center; padding-right: 13px; color: #7aa6f7; letter-spacing: -0.02em; }
.show u { text-underline-offset: 2px; text-decoration-thickness: 1.200px; }
.show .caret { margin-left: 4px; }

.grid { width: 967.500px; margin-top: 16px; border-collapse: collapse; table-layout: fixed; color: #fff; }
.c1 { width: 282.500px; }
.c2 { width: 105.500px; }
.c3 { width: 106px; }
.c4 { width: 114px; }
.c5 { width: 141px; }
.c6 { width: 218.500px; }
.grid th, .grid td { border: var(--b) solid var(--line); padding: 0 7.500px; text-align: left; vertical-align: middle; }
.grid th { height: 41px; letter-spacing: -0.004em; }
.grid th:nth-child(2) { letter-spacing: -0.014em; }
.grid td { height: 87px; white-space: nowrap; }
.grid th:first-child, .grid td:first-child { padding-left: 8px; }
.grid tbody tr:first-child td { height: 89px; }
.th { display: flex; align-items: center; gap: 4px; }
.txt { padding-top: 0.800px; }
.num { letter-spacing: -0.007em; }
.badge { display: inline-flex; align-items: center; gap: 4px; height: 22px; padding: 0 7.300px; border: var(--b) solid; border-radius: 4px; font-size: 12px; font-weight: 700; line-height: 12px; letter-spacing: .006em; vertical-align: middle; }
.badge .icon, .pill .icon { width: 12px; height: 12px; }
.capacity { background: #343a40; border-color: #495057; color: #f8f9fa; letter-spacing: .04em; padding: 0 7.300px 0 7.800px; }
.no { background: #270c0e; border-color: #7b2931; color: #dc858d; }
.yes { background: #0a1a11; border-color: #23492f; color: #84b598; }
.pill { display: inline-flex; align-items: center; gap: 4px; height: 20.400px; padding: 0 7.600px; border-radius: 11px; font-size: 12px; font-weight: 700; line-height: 12px; letter-spacing: .009em; color: #fff; vertical-align: middle; }
.cancelled { background: #cb444a; }
.completed { background: #40845a; }
.requested { background: #316cf4; }
.handling { background: #5dc8ec; color: #000; }
.pending { background: #f5c344; color: #000; }
.actions { display: flex; flex-wrap: wrap; gap: 8px; padding-left: 4px; width: 170px; }
.btn.sm { height: 31px; padding: 0 7.700px; border-radius: 4px; font-size: 14px; letter-spacing: -0.015em; }
.btn.sm .icon { width: 14px; height: 14px; margin-right: 4px; }
.info { color: #5dc8ec; }
.warn { color: #f5c344; }
.prim { color: #316cf4; }

.perks { height: 255px; background: var(--green); color: #fff; display: flex; justify-content: space-between; padding: 53px 226.500px 0; }
.perk { display: flex; flex-direction: column; align-items: center; font-size: 20px; line-height: 30px; white-space: nowrap; }
.perk .icon { width: 56px; height: 56px; margin-bottom: 22px; }
.perk strong { letter-spacing: -0.019em; }
.perk span { font-weight: 340; letter-spacing: -0.040em; }

.footer { height: 407px; background: #212d3c; color: #fff; padding-top: 48px; }
.footer-cols { height: 238px; display: flex; padding-left: 281px; align-items: flex-start; }
.plus { width: 345px; display: flex; flex-direction: column; }
.plus strong { width: 202px; text-align: center; color: #8b949c; letter-spacing: -0.008em; white-space: nowrap; }
.plus span { width: 202px; text-align: center; }
.blob { position: relative; width: 167px; height: 122px; margin: 5px 0 0 19px; }
.blob-shape { display: block; width: 167px; height: 122px; }
.blob-logo { position: absolute; left: 31px; top: 43px; display: flex; }
.blob-logo .swan { width: 26px; height: 32px; }
.blob-text { display: flex; flex-direction: column; align-items: flex-end; margin-left: 10.500px; }
.blob-text span { width: auto; font: 400 26.500px/32px Lato, sans-serif; letter-spacing: .7px; margin-top: 1px; }
.blob-text small { font-size: 8.500px; line-height: 10px; font-weight: 600; letter-spacing: 3px; margin: -2px -3px 0 0; color: #4d9f86; }
.links { display: flex; flex-direction: column; color: #8b949c; }
.store { width: 301.500px; }
.care { width: 312.500px; }
h4 { margin: -0.700px 0 9px; font-size: 24px; line-height: 29px; font-weight: 700; letter-spacing: -0.024em; color: #fff; }
.cards { display: flex; gap: 20px; color: #fff; margin-top: 5px; }
.cards .icon { width: 56px; height: 56px; }
.copy { margin: 0; padding-top: 0.500px; text-align: center; letter-spacing: -0.0215em; }
.copy a { color: #54ab92; }
.social { display: flex; justify-content: center; gap: 12px; margin-top: 18px; color: #8b98a3; }
.social .icon { width: 28px; height: 28px; }
</style>
